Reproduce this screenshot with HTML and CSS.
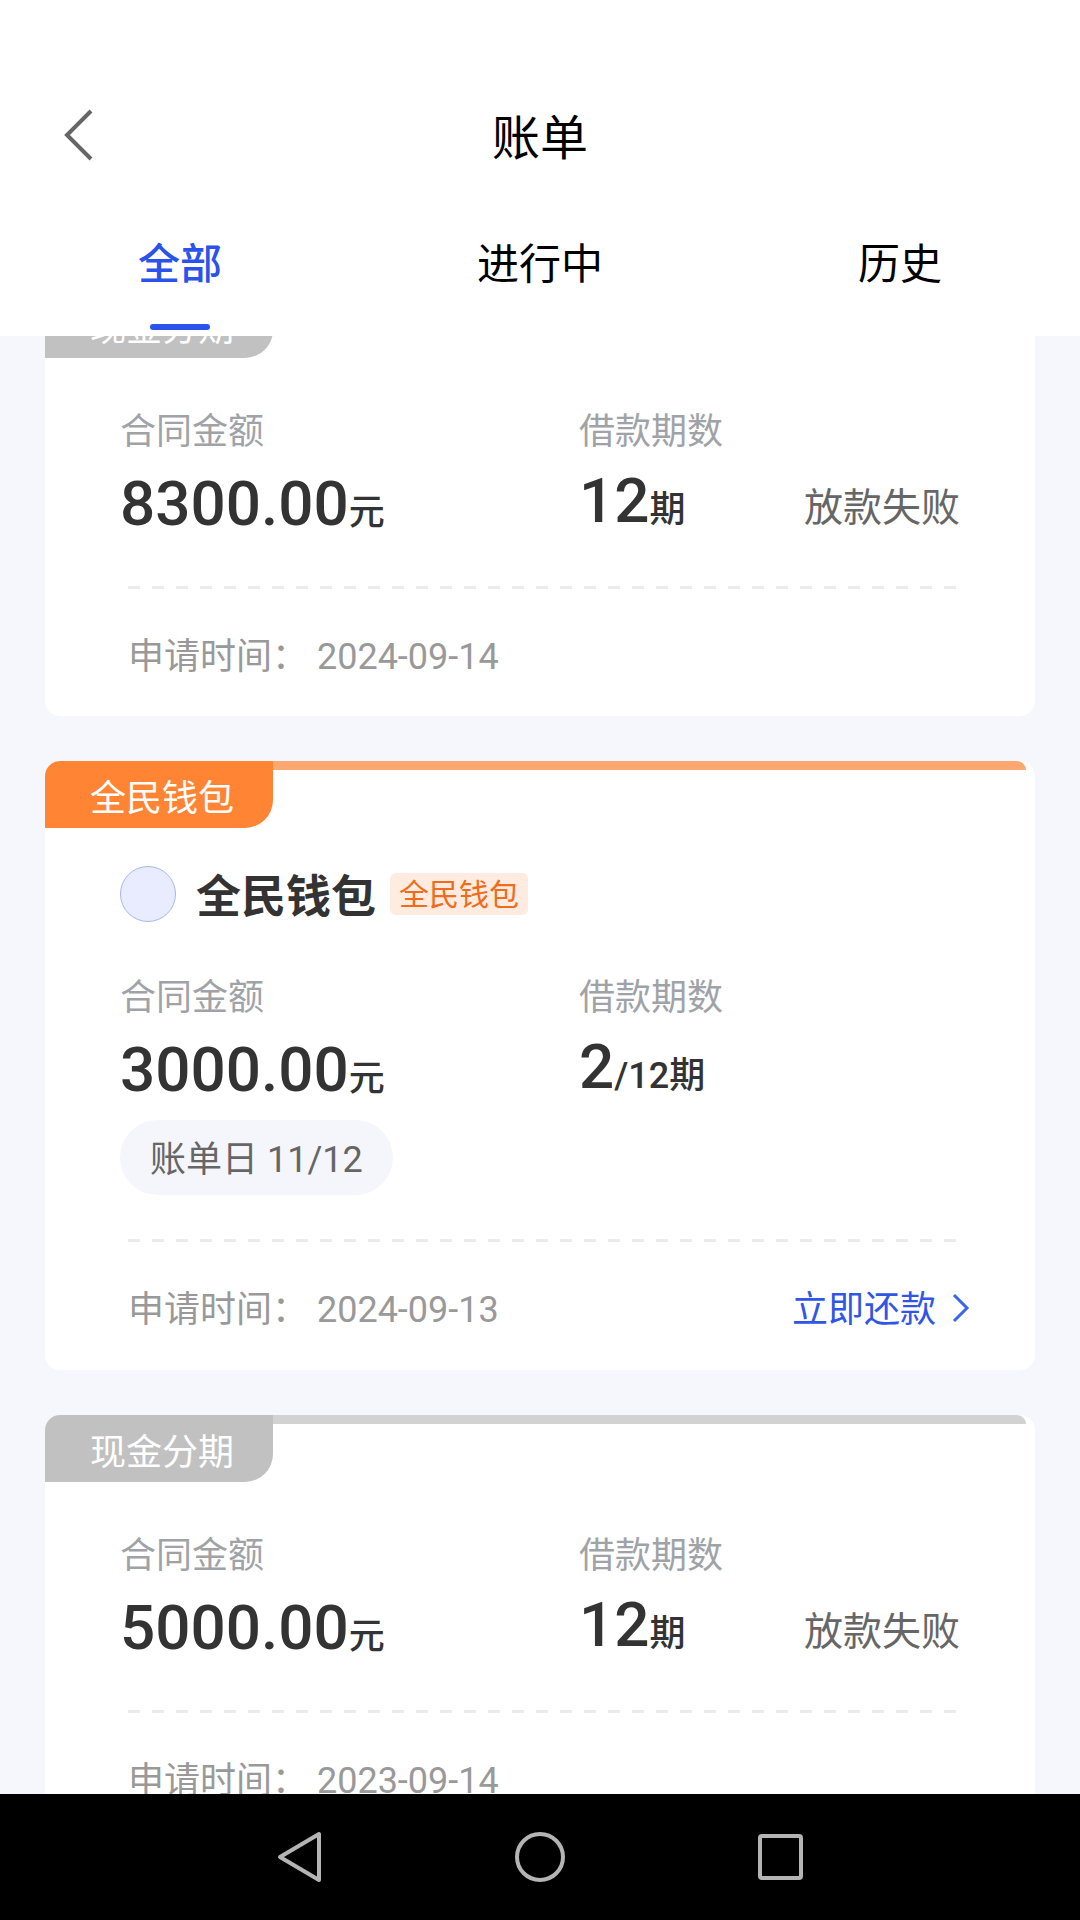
FILE: index.html
```html
<!DOCTYPE html>
<html lang="zh-CN">
<head>
<meta charset="utf-8">
<meta name="viewport" content="width=device-width, initial-scale=1">
<title>账单</title>
<link rel="stylesheet" href="styles.css">
</head>
<body>
<header class="header">
  <div class="titlebar">
    <button class="back" type="button" aria-label="返回">
      <svg width="30" height="54" viewBox="0 0 30 54" fill="none" stroke="#666" stroke-width="4"><path d="M28 3 4 27l24 24"/></svg>
    </button>
    <h1 class="title">账单</h1>
  </div>
  <nav class="tabs">
    <a class="tab tab-active" href="#all">全部</a>
    <a class="tab" href="#ongoing">进行中</a>
    <a class="tab" href="#history">历史</a>
  </nav>
</header>

<main class="content">
  <div class="list">
    <article class="card">
      <div class="card-top"><span class="ribbon">现金分期</span><span class="strip"></span></div>
      <div class="card-body">
        <div class="facts">
          <div class="fact">
            <p class="label">合同金额</p>
            <p class="amount">8300.00<span class="unit">元</span></p>
          </div>
          <div class="fact">
            <p class="label">借款期数</p>
            <p class="amount term">12<span class="unit">期</span></p>
          </div>
          <p class="status">放款失败</p>
        </div>
        <div class="card-foot">
          <span class="applied">申请时间： 2024-09-14</span>
        </div>
      </div>
    </article>

    <article class="card card-orange">
      <div class="card-top"><span class="ribbon">全民钱包</span><span class="strip"></span></div>
      <div class="card-body card-body-titled">
        <div class="product">
          <span class="logo"></span>
          <h2 class="product-name">全民钱包</h2>
          <span class="badge">全民钱包</span>
        </div>
        <div class="facts">
          <div class="fact">
            <p class="label">合同金额</p>
            <p class="amount">3000.00<span class="unit">元</span></p>
            <p class="due">账单日 11/12</p>
          </div>
          <div class="fact">
            <p class="label">借款期数</p>
            <p class="amount term">2<span class="unit">/12期</span></p>
          </div>
        </div>
        <div class="card-foot">
          <span class="applied">申请时间： 2024-09-13</span>
          <a class="repay" href="#repay">立即还款
            <svg width="18" height="34" viewBox="0 0 18 34" fill="none" stroke="#3b66ea" stroke-width="3"><path d="m2 2 13 13L2 28"/></svg>
          </a>
        </div>
      </div>
    </article>

    <article class="card">
      <div class="card-top"><span class="ribbon">现金分期</span><span class="strip"></span></div>
      <div class="card-body">
        <div class="facts">
          <div class="fact">
            <p class="label">合同金额</p>
            <p class="amount">5000.00<span class="unit">元</span></p>
          </div>
          <div class="fact">
            <p class="label">借款期数</p>
            <p class="amount term">12<span class="unit">期</span></p>
          </div>
          <p class="status">放款失败</p>
        </div>
        <div class="card-foot">
          <span class="applied">申请时间： 2023-09-14</span>
        </div>
      </div>
    </article>
  </div>
</main>

<nav class="sysbar">
  <button class="key" type="button" aria-label="后退">
    <svg width="60" height="60" viewBox="0 0 60 60" fill="none" stroke="#b4b4b4" stroke-width="4" stroke-linejoin="round"><path d="M49 7v46L10 30z"/></svg>
  </button>
  <button class="key" type="button" aria-label="主屏幕">
    <svg width="60" height="60" viewBox="0 0 60 60" fill="none" stroke="#b4b4b4" stroke-width="4"><circle cx="30" cy="30" r="23"/></svg>
  </button>
  <button class="key" type="button" aria-label="最近任务">
    <svg width="60" height="60" viewBox="0 0 60 60" fill="none" stroke="#b4b4b4" stroke-width="4"><rect x="10" y="9" width="41" height="42" rx="2"/></svg>
  </button>
</nav>
</body>
</html>
```

FILE: styles.css
```css
* {
  box-sizing: border-box;
  margin: 0;
  padding: 0;
}

body {
  display: flex;
  flex-direction: column;
  height: 100vh;
  background: #f6f7fc;
  color: #333;
  font-family: Roboto, "Noto Sans CJK SC", sans-serif;
  font-size: 36px;
  line-height: 48px;
}

button {
  border: 0;
  background: none;
  font: inherit;
}

a {
  color: inherit;
  text-decoration: none;
}

svg {
  display: block;
}

/* Header */
.header {
  flex: none;
  background: #fff;
  color: #000;
}

.titlebar {
  display: grid;
  grid-template-columns: 96px 1fr 96px;
  align-items: center;
  padding-top: 72px;
  height: 198px;
}

.back {
  justify-self: end;
  padding: 0 3px;
}

.title {
  padding-top: 8px;
  font-size: 48px;
  font-weight: 400;
  line-height: 72px;
  text-align: center;
}

.tabs {
  display: grid;
  grid-template-columns: repeat(3, 1fr);
  height: 138px;
}

.tab {
  display: flex;
  flex-direction: column;
  align-items: center;
  justify-content: space-between;
  padding: 37px 0 6px;
  font-size: 42px;
  line-height: 60px;
}

.tab-active {
  color: #2953ea;
  font-weight: 500;
}

.tab-active::after {
  content: "";
  width: 60px;
  height: 6px;
  border-radius: 3px;
  background: #2953ea;
}

/* Bill list, scrolled part of the way into its first card */
.content {
  flex: 1;
  min-height: 0;
  overflow: hidden;
}

.list {
  display: flex;
  flex-direction: column;
  gap: 45px;
  margin-top: -45px;
  padding: 0 45px;
}

.card {
  flex: none;
  overflow: hidden;
  border-radius: 15px;
  background: #fff;
}

.card-top {
  display: flex;
  align-items: flex-start;
}

.ribbon {
  padding: 14px 39px 5px 45px;
  border-bottom-right-radius: 28px;
  background: #c1c1c1;
  color: #fff;
}

.strip {
  flex: 1;
  height: 9px;
  margin-right: 9px;
  border-top-right-radius: 9px;
  background: #d2d2d2;
}

.card-orange .ribbon {
  background: #ff8534;
}

.card-orange .strip {
  background: #fca870;
}

.card-body {
  padding: 50px 75px 35px;
}

.card-body-titled {
  padding-top: 38px;
  padding-bottom: 36px;
}

.product {
  display: flex;
  align-items: center;
  margin-bottom: 52px;
}

.logo {
  width: 56px;
  height: 56px;
  border: 1px solid #a9b6e6;
  border-radius: 50%;
  background: #e9ecff;
}

.product-name {
  margin: 0 14px 0 20px;
  padding-top: 8px;
  font-size: 45px;
  font-weight: 700;
}

.badge {
  padding: 1px 9px 0;
  border-radius: 6px;
  background: #ffebe0;
  color: #ee6c1c;
  font-size: 30px;
  line-height: 41px;
}

.facts {
  display: grid;
  grid-template-columns: 459fr 160fr 221fr;
  align-items: start;
  padding-bottom: 44px;
}

.label {
  color: #9fa3a8;
}

.amount {
  height: 86px;
  padding-top: 4px;
  font-size: 62px;
  font-weight: 500;
  line-height: 88px;
  white-space: nowrap;
}

.term {
  padding-top: 1px;
}

.unit {
  font-size: 36px;
  line-height: 48px;
}

.due {
  width: fit-content;
  margin-top: 12px;
  padding: 16px 30px 11px;
  border-radius: 38px;
  background: #f5f6fc;
  color: #666;
}

.status {
  align-self: end;
  justify-self: end;
  padding-bottom: 10px;
  color: #666;
  font-size: 39px;
}

.card-foot {
  display: flex;
  justify-content: space-between;
  margin-left: 8px;
  padding-top: 47px;
  background: repeating-linear-gradient(90deg, #ebebeb 0 12px, transparent 12px 24px) top / 100% 3px no-repeat;
  color: #999;
}

.repay {
  display: flex;
  align-items: center;
  gap: 16px;
  margin-right: -10px;
  color: #2f56e6;
}

/* System navigation */
.sysbar {
  display: flex;
  flex: none;
  align-items: center;
  justify-content: center;
  gap: 180px;
  height: 126px;
  background: #000;
}
```
